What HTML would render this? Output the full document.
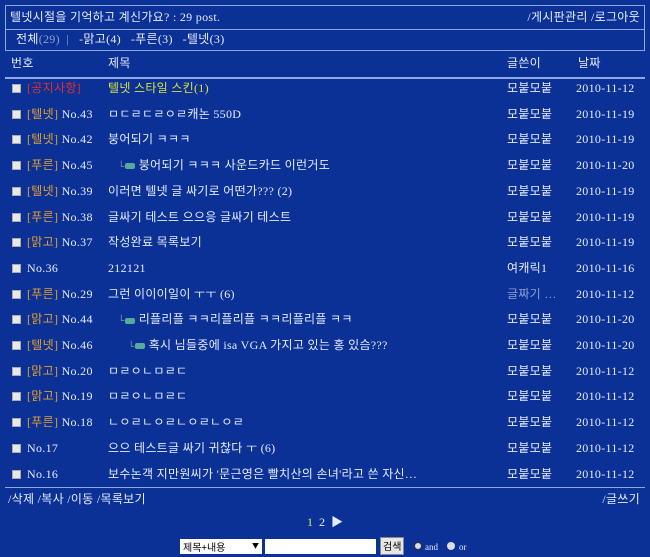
<!DOCTYPE html>
<html><head><meta charset="utf-8"><style>
body{margin:0;width:650px;height:557px;background:#0b3197;font-family:"Liberation Serif","Noto Sans CJK KR",serif;font-size:12px;color:#e6ecff;position:relative;overflow:hidden}
.a{position:absolute;white-space:nowrap;line-height:14px}
.k{font-family:"Liberation Serif","Noto Sans CJK KR",serif;font-size:12px;letter-spacing:0.3px}
.box{position:absolute;left:5px;top:5px;width:638px;height:44px;border:1px solid #8fa9e0}
.hl{position:absolute;left:5px;width:640px;height:1px;background:#8fa9e0}
.cb{position:absolute;left:12px;width:9px;height:9px;background:#e8e8e8;border:1px solid #aaa;box-sizing:border-box}
.c{color:#e0a030}.r{color:#e03030}.g{color:#8fa0d0}
.ic{display:inline-block;width:10px;height:6px;background:#5a9;border-radius:2px;margin-right:4px;vertical-align:middle}
.ln{color:#9ab;font-size:9px}
</style></head><body>
<div class="box"></div>
<div class="hl" style="top:29px"></div>
<div class="a k" style="left:10px;top:10px">텔넷시절을 기억하고 계신가요? : 29 post.</div>
<div class="a k" style="right:10px;top:10px">/게시판관리 /로그아웃</div>
<div class="a k" style="left:16px;top:32px">전체<span class="g">(29)</span> &nbsp;<span class="g">|</span>&nbsp;&nbsp; -맑고(4) &nbsp; -푸른(3) &nbsp; -텔넷(3)</div>
<div class="a k" style="left:11px;top:56px">번호</div>
<div class="a k" style="left:108px;top:56px">제목</div>
<div class="a k" style="left:507px;top:56px">글쓴이</div>
<div class="a k" style="left:578px;top:56px">날짜</div>
<div class="hl" style="top:77px;height:2px"></div>

<div id="rows"></div>
<div class="hl" style="top:487px"></div>
<div class="a k" style="left:8px;top:492px">/삭제 /복사 /이동 /목록보기</div>
<div class="a k" style="right:10px;top:492px">/글쓰기</div>
<div class="a" style="left:307px;top:515px;font-size:12px"><span style="color:#e0e060">1</span> &nbsp;2 &nbsp;<span style="font-size:12px">▶</span></div>
<div class="a" style="left:180px;top:539px;width:82px;height:15px;background:#fff;color:#000;font-size:10px;line-height:15px;padding-left:3px;box-sizing:border-box;font-family:'Noto Sans CJK KR',sans-serif">제목+내용<span style="position:absolute;right:3px;font-size:7px">▼</span></div>
<div class="a" style="left:265px;top:539px;width:111px;height:15px;background:#fff"></div>
<div class="a" style="left:380px;top:537px;height:16px;background:#e6e6e6;color:#000;border:1px solid #888;padding:0 2px;font-size:10px;line-height:16px;font-family:'Noto Sans CJK KR',sans-serif">검색</div>
<div class="a" style="left:414px;top:542px;width:8px;height:8px;border-radius:50%;background:#ddd;border:1px solid #333;box-sizing:border-box"></div>
<div class="a" style="left:425px;top:540px;font-size:9px">and</div>
<div class="a" style="left:447px;top:542px;width:8px;height:8px;border-radius:50%;background:#ddd"></div>
<div class="a" style="left:459px;top:540px;font-size:9px">or</div>
<script>
var R=[
['<span class="r">[공지사항]</span>','<span style="color:#d8e040">텔넷 스타일 스킨(1)</span>','모붙모붙','2010-11-12'],
['<span class="c">[텔넷]</span> No.43','ㅁㄷㄹㄷㄹㅇㄹ캐논 550D','모붙모붙','2010-11-19'],
['<span class="c">[텔넷]</span> No.42','붕어되기 ㅋㅋㅋ','모붙모붙','2010-11-19'],
['<span class="c">[푸른]</span> No.45','<span style="padding-left:10px"><span class="ln">└</span><span class="ic"></span>붕어되기 ㅋㅋㅋ 사운드카드 이런거도</span>','모붙모붙','2010-11-20'],
['<span class="c">[텔넷]</span> No.39','이러면 텔넷 글 싸기로 어떤가??? (2)','모붙모붙','2010-11-19'],
['<span class="c">[푸른]</span> No.38','글싸기 테스트 으으응 글싸기 테스트','모붙모붙','2010-11-19'],
['<span class="c">[맑고]</span> No.37','작성완료 목록보기','모붙모붙','2010-11-19'],
['No.36','212121','여캐릭1','2010-11-16'],
['<span class="c">[푸른]</span> No.29','그런 이이이일이 ㅜㅜ (6)','<span class="g">글짜기 …</span>','2010-11-12'],
['<span class="c">[맑고]</span> No.44','<span style="padding-left:10px"><span class="ln">└</span><span class="ic"></span>리플리플 ㅋㅋ리플리플 ㅋㅋ리플리플 ㅋㅋ</span>','모붙모붙','2010-11-20'],
['<span class="c">[텔넷]</span> No.46','<span style="padding-left:20px"><span class="ln">└</span><span class="ic"></span>혹시 님들중에 isa VGA 가지고 있는 홍 있슴???</span>','모붙모붙','2010-11-20'],
['<span class="c">[맑고]</span> No.20','ㅁㄹㅇㄴㅁㄹㄷ','모붙모붙','2010-11-12'],
['<span class="c">[맑고]</span> No.19','ㅁㄹㅇㄴㅁㄹㄷ','모붙모붙','2010-11-12'],
['<span class="c">[푸른]</span> No.18','ㄴㅇㄹㄴㅇㄹㄴㅇㄹㄴㅇㄹ','모붙모붙','2010-11-12'],
['No.17','으으 테스트글 싸기 귀찮다 ㅜ (6)','모붙모붙','2010-11-12'],
['No.16','보수논객 지만원씨가 \'문근영은 빨치산의 손녀\'라고 쓴 자신…','모붙모붙','2010-11-12']];
var h='';R.forEach(function(r,i){var y=81+i*25.7;
h+='<div class="cb" style="top:'+(y+3)+'px"></div><div class="a k" style="left:27px;top:'+y+'px">'+r[0]+'</div><div class="a k" style="left:108px;top:'+y+'px">'+r[1]+'</div><div class="a k" style="left:507px;top:'+y+'px">'+r[2]+'</div><div class="a k" style="left:576px;top:'+y+'px">'+r[3]+'</div>';});
document.getElementById('rows').innerHTML=h;
</script>
</body></html>
